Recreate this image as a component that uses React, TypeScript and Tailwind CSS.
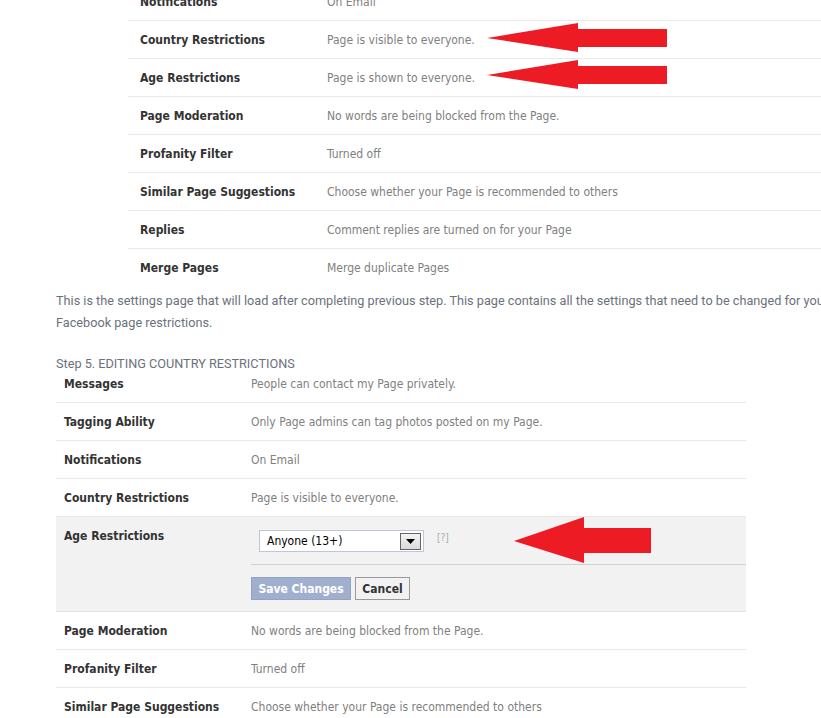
import React from 'react';

const tableFont = { fontFamily: '"DejaVu Sans Condensed", Tahoma, "DejaVu Sans", sans-serif' };
const bodyFont = { fontFamily: 'Roboto, "Open Sans", sans-serif' };

interface Row {
  label: string;
  value: string;
}

const topRows: Row[] = [
  { label: 'Notifications', value: 'On Email' },
  { label: 'Country Restrictions', value: 'Page is visible to everyone.' },
  { label: 'Age Restrictions', value: 'Page is shown to everyone.' },
  { label: 'Page Moderation', value: 'No words are being blocked from the Page.' },
  { label: 'Profanity Filter', value: 'Turned off' },
  { label: 'Similar Page Suggestions', value: 'Choose whether your Page is recommended to others' },
  { label: 'Replies', value: 'Comment replies are turned on for your Page' },
  { label: 'Merge Pages', value: 'Merge duplicate Pages' },
];

const beforeEdit: Row[] = [
  { label: 'Tagging Ability', value: 'Only Page admins can tag photos posted on my Page.' },
  { label: 'Notifications', value: 'On Email' },
  { label: 'Country Restrictions', value: 'Page is visible to everyone.' },
];

const afterEdit: Row[] = [
  { label: 'Page Moderation', value: 'No words are being blocked from the Page.' },
  { label: 'Profanity Filter', value: 'Turned off' },
  { label: 'Similar Page Suggestions', value: 'Choose whether your Page is recommended to others' },
];

function SettingRow({ label, value, labelWidth, pad, last }: Row & { labelWidth: string; pad: string; last?: boolean }) {
  return (
    <div className={`flex h-[38px] items-center ${last ? '' : 'border-b border-[#e9e9e9]'}`}>
      <div className={`${labelWidth} ${pad} shrink-0 text-[12px] font-bold text-[#333]`}>{label}</div>
      <div className="whitespace-nowrap text-[12px] text-[#808080]">{value}</div>
    </div>
  );
}

// classic windows-style select arrow
function SelectArrow() {
  return (
    <div className="flex h-[17px] w-[21px] items-center justify-center border border-[#646464] bg-gradient-to-b from-[#f4f4f4] to-[#d9d9d9]">
      <svg width="9" height="5" viewBox="0 0 9 5">
        <polygon points="0,0 9,0 4.5,5" fill="#000" />
      </svg>
    </div>
  );
}

function AgeEditor() {
  return (
    <div className="flex h-[95px] border-b border-[#e2e2e2] bg-[#f2f2f2]">
      <div className="w-[195px] shrink-0 pl-2 pt-[12px] text-[12px] font-bold leading-[15px] text-[#333]">Age Restrictions</div>
      <div className="flex-1 pt-[13px]">
        <div className="flex items-start">
          <div className="ml-2 flex h-[22px] w-[165px] items-center justify-between border border-[#bdc7d8] bg-white pl-[7px] pr-[2px]">
            <span className="text-[12px] text-black">Anyone (13+)</span>
            <SelectArrow />
          </div>
          <span className="ml-[13px] text-[10px] text-[#aaa]">[?]</span>
        </div>
        <div className="mt-[12px] border-t border-[#d0d0d0]" />
        <div className="mt-[12px] flex gap-[4px]">
          <button className="h-[23px] w-[100px] border border-[#94a3c4] bg-[#a1afcf] text-[12px] font-bold text-white">
            Save Changes
          </button>
          <button className="h-[23px] w-[55px] border border-[#999] bg-[#f2f2f2] text-[12px] font-bold text-[#333]">
            Cancel
          </button>
        </div>
      </div>
    </div>
  );
}

function Arrows() {
  return (
    <svg className="pointer-events-none absolute left-0 top-0" width="821" height="718">
      <g fill="#ed1c24">
        <polygon points="487,38 578,23 578,29 667,29 667,47 578,47 578,52" />
        <polygon points="487,75 578,60 578,66 667,66 667,84 578,84 578,89" />
        <polygon points="514,541 584,517 584,528 651,528 651,553 584,553 584,563" />
      </g>
    </svg>
  );
}

export default function App() {
  return (
    <div className="relative h-[718px] w-[821px] overflow-hidden bg-white" style={tableFont}>
      <div className="ml-[128px] mt-[-17px] w-[760px]">
        {topRows.map((r, i) => (
          <SettingRow key={r.label} {...r} labelWidth="w-[199px]" pad="pl-3" last={i === topRows.length - 1} />
        ))}
      </div>

      <div className="ml-[56px] mt-[3px] w-[900px] text-[12.7px] leading-[22px] text-[#6b717c]" style={bodyFont}>
        <p>
          This is the settings page that will load after completing previous step. This page contains all the settings that need to be changed for your
          <br />
          Facebook page restrictions.
        </p>
        <p className="mt-[19px]">Step 5. EDITING COUNTRY RESTRICTIONS</p>
      </div>

      <div className="ml-[56px] w-[690px]">
        <div className="flex h-[28px] items-start border-b border-[#e9e9e9] pt-[2px] leading-[15px]">
          <div className="w-[195px] shrink-0 pl-2 text-[12px] font-bold text-[#333]">Messages</div>
          <div className="text-[12px] text-[#808080]">People can contact my Page privately.</div>
        </div>
        {beforeEdit.map((r) => (
          <SettingRow key={r.label} {...r} labelWidth="w-[195px]" pad="pl-2" />
        ))}
        <AgeEditor />
        {afterEdit.map((r) => (
          <SettingRow key={r.label} {...r} labelWidth="w-[195px]" pad="pl-2" />
        ))}
      </div>

      <Arrows />
    </div>
  );
}
